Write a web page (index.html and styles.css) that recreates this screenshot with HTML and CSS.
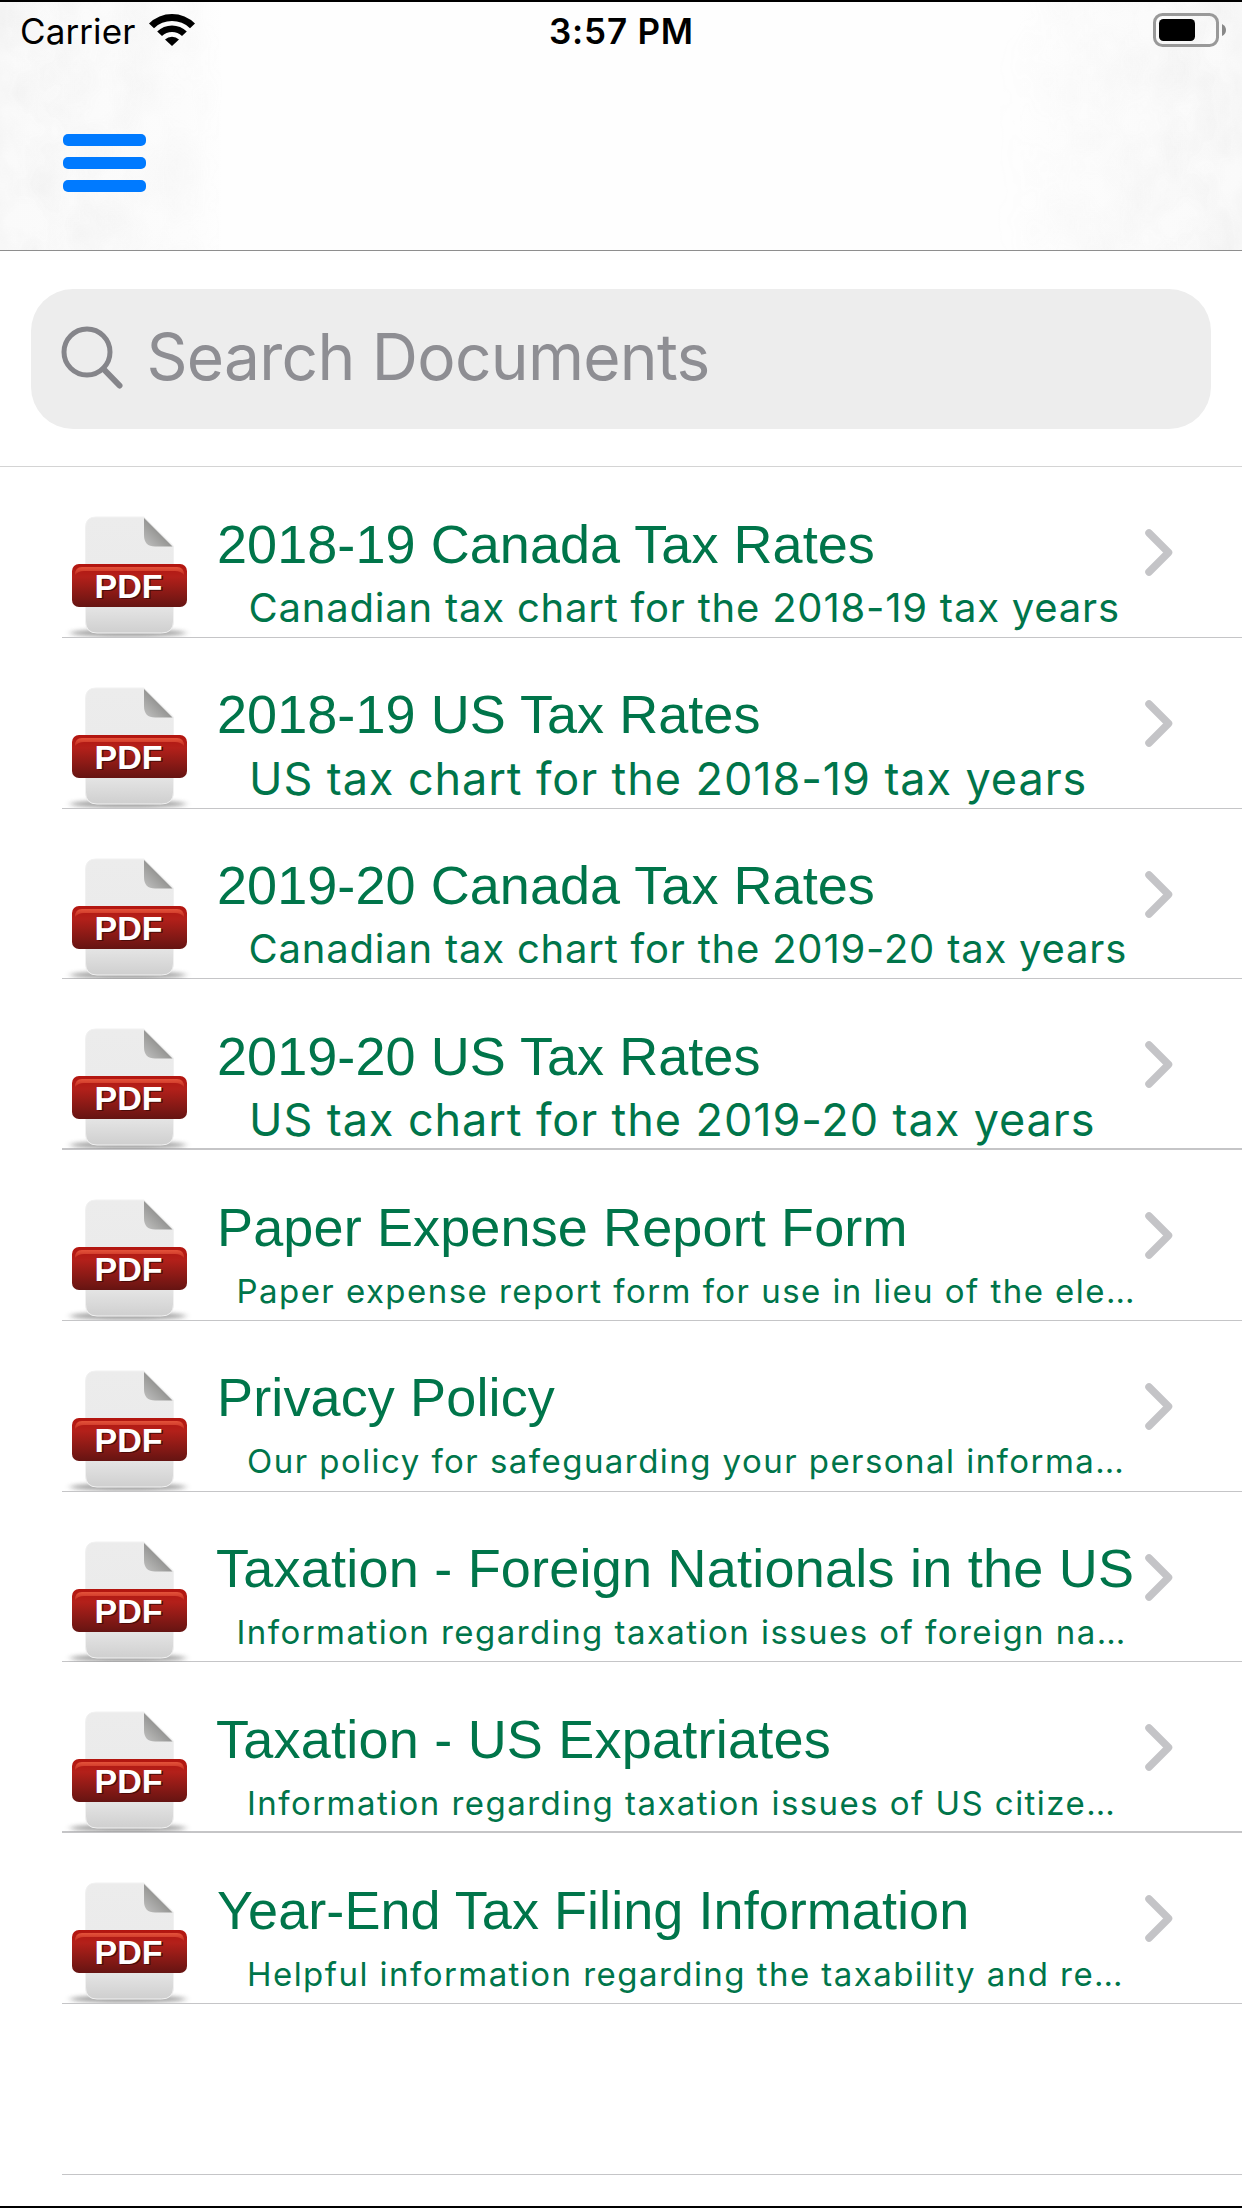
FILE: index.html
```html
<!DOCTYPE html>
<html lang="en">
<head>
<meta charset="utf-8">
<title>Documents</title>
<link rel="stylesheet" href="styles.css">
</head>
<body>
<svg class="defs" width="0" height="0" aria-hidden="true">
  <defs>
    <linearGradient id="paper" x1="0" y1="0" x2="0" y2="1">
      <stop offset="0" stop-color="#ececec"/><stop offset=".45" stop-color="#ebebeb"/><stop offset=".78" stop-color="#e4e4e4"/><stop offset="1" stop-color="#cfcfcf"/>
    </linearGradient>
    <linearGradient id="fold" x1=".1" y1=".9" x2=".6" y2=".4">
      <stop offset="0" stop-color="#b9b9b8"/><stop offset="1" stop-color="#8d8d8b"/>
    </linearGradient>
    <linearGradient id="band" x1="0" y1="0" x2="0" y2="1">
      <stop offset="0" stop-color="#b3150f"/><stop offset=".3" stop-color="#b3201a"/><stop offset="1" stop-color="#651412"/>
    </linearGradient>
    <linearGradient id="shine" x1="0" y1="0" x2="0" y2="1">
      <stop offset="0" stop-color="#e4523a"/><stop offset="1" stop-color="#c22c20"/>
    </linearGradient>
    <filter id="soft" x="-20%" y="-80%" width="140%" height="260%"><feGaussianBlur stdDeviation="3 2"/></filter>
    <symbol id="pdf" viewBox="0 0 130 170">
      <ellipse cx="66" cy="166" rx="58" ry="4" fill="#888" opacity=".75" filter="url(#soft)"/>
      <path d="M34 50H82L111.500 79V154Q111.500 166 99.500 166H35Q23.500 166 23.500 154V61Q23.500 50 34 50Z" fill="url(#paper)" stroke="#f1f1f1"/>
      <path d="M82 51L110.500 79.500H93Q82 79.500 82 68Z" fill="url(#fold)"/>
      <rect x="10" y="97" width="115" height="43" rx="7" fill="url(#band)"/>
      <path d="M13 108Q13 100 20 100H115Q122 100 122 108Q119 104 113 104H22Q16 104 13 108Z" fill="url(#shine)"/>
      <text class="pdf-label shade" x="34" y="132">PDF</text>
      <text class="pdf-label" x="32.500" y="130.500">PDF</text>
    </symbol>
    <symbol id="chevron" viewBox="0 0 28 47">
      <path d="M4 4L23.500 23.500L4 43" fill="none" stroke="#c4c4c7" stroke-width="7.500" stroke-linecap="round" stroke-linejoin="round"/>
    </symbol>
  </defs>
</svg>
<div class="screen">
  <header class="nav">
    <svg class="texture" width="1242" height="248" aria-hidden="true">
      <defs>
        <filter id="grain" x="0" y="0" width="100%" height="100%">
          <feTurbulence type="fractalNoise" baseFrequency=".025 .02" numOctaves="3" seed="4"/>
          <feColorMatrix values="0 0 0 0 .5  0 0 0 0 .5  0 0 0 0 .5  .22 0 0 0 -.06"/>
        </filter>
        <linearGradient id="edges">
          <stop offset="0" stop-color="#fff"/><stop offset=".16" stop-color="#555"/><stop offset=".18" stop-color="#000"/>
          <stop offset=".8" stop-color="#000"/><stop offset=".86" stop-color="#555"/><stop offset="1" stop-color="#fff"/>
        </linearGradient>
        <mask id="sides"><rect width="1242" height="248" fill="url(#edges)"/></mask>
      </defs>
      <g mask="url(#sides)"><rect width="1242" height="248" filter="url(#grain)"/></g>
    </svg>
    <div class="status">
      <div class="carrier"><span>Carrier</span>
        <svg width="46" height="33" viewBox="0 0 46 33">
          <path d="M0 10.500A32.500 32.500 0 0 1 46 10.500L41 15.200A26 26 0 0 0 5 15.200Z"/>
          <path d="M8.200 18.500A21 21 0 0 1 37.800 18.500L33 23A14.500 14.500 0 0 0 13 23Z"/>
          <path d="M16 26.500A10.500 10.500 0 0 1 30 26.500L23 33Z"/>
        </svg>
      </div>
      <div class="time">3:57 PM</div>
      <div class="battery">
        <svg width="73" height="34" viewBox="0 0 73 34">
          <rect x="1.500" y="1.500" width="63" height="31" rx="8" fill="none" stroke="#999" stroke-width="3"/>
          <rect x="6" y="6" width="36" height="22" rx="4.500"/>
          <path d="M69 11Q73 13 73 17T69 23Z" fill="#888"/>
        </svg>
      </div>
    </div>
    <button class="menu" aria-label="Menu"><span></span><span></span><span></span></button>
  </header>
  <div class="search">
    <label class="field">
      <svg width="64" height="66" viewBox="0 0 64 66" fill="none" stroke="#85858a">
        <circle cx="26" cy="26" r="23" stroke-width="5"/><path d="M42.500 43L58.500 59.500" stroke-width="6" stroke-linecap="round"/>
      </svg>
      <span>Search Documents</span>
    </label>
  </div>
  <main class="list">
    <article class="row"><svg class="icon"><use href="#pdf"/></svg><div class="text"><h2>2018-19 Canada Tax Rates</h2><p class="medium">Canadian tax chart for the 2018-19 tax years</p></div><svg class="chev"><use href="#chevron"/></svg></article>
    <article class="row"><svg class="icon"><use href="#pdf"/></svg><div class="text"><h2>2018-19 US Tax Rates</h2><p class="large">US tax chart for the 2018-19 tax years</p></div><svg class="chev"><use href="#chevron"/></svg></article>
    <article class="row"><svg class="icon"><use href="#pdf"/></svg><div class="text"><h2>2019-20 Canada Tax Rates</h2><p class="medium">Canadian tax chart for the 2019-20 tax years</p></div><svg class="chev"><use href="#chevron"/></svg></article>
    <article class="row heavy"><svg class="icon"><use href="#pdf"/></svg><div class="text"><h2>2019-20 US Tax Rates</h2><p class="large">US tax chart for the 2019-20 tax years</p></div><svg class="chev"><use href="#chevron"/></svg></article>
    <article class="row"><svg class="icon"><use href="#pdf"/></svg><div class="text"><h2 class="loose">Paper Expense Report Form</h2><p class="outdent">Paper expense report form for use in lieu of the ele…</p></div><svg class="chev"><use href="#chevron"/></svg></article>
    <article class="row"><svg class="icon"><use href="#pdf"/></svg><div class="text"><h2 class="loose">Privacy Policy</h2><p>Our policy for safeguarding your personal informa…</p></div><svg class="chev"><use href="#chevron"/></svg></article>
    <article class="row"><svg class="icon"><use href="#pdf"/></svg><div class="text"><h2 class="looser">Taxation - Foreign Nationals in the US</h2><p class="outdent">Information regarding taxation issues of foreign na…</p></div><svg class="chev"><use href="#chevron"/></svg></article>
    <article class="row heavy"><svg class="icon"><use href="#pdf"/></svg><div class="text"><h2 class="looser">Taxation - US Expatriates</h2><p>Information regarding taxation issues of US citize…</p></div><svg class="chev"><use href="#chevron"/></svg></article>
    <article class="row"><svg class="icon"><use href="#pdf"/></svg><div class="text"><h2>Year-End Tax Filing Information</h2><p>Helpful information regarding the taxability and re…</p></div><svg class="chev"><use href="#chevron"/></svg></article>
    <div class="row"></div>
  </main>
</div>
</body>
</html>
```
FILE: styles.css
```css
* { box-sizing: border-box; }
body { margin: 0; background: #fff; }
.defs { position: absolute; }
.screen {
  width: 1242px; height: 2208px; overflow: hidden;
  border-top: 2px solid #000; border-bottom: 2px solid #000;
  font-family: Inter, "Liberation Sans", sans-serif;
  background: #fff;
}
.nav {
  position: relative; height: 249px; border-bottom: 1px solid #8e8e8e;
  background: linear-gradient(90deg, #fafafa, #fcfcfc 15%, #fefefe 18%, #fefefe 82%, #fcfcfc 86%, #fafafa);
}
.texture { position: absolute; left: 0; top: 0; }
.status {
  position: relative; height: 60px; padding: 0 16px 0 20px;
  display: grid; grid-template-columns: 1fr auto 1fr; align-items: start;
  font-size: 35px; line-height: 58px; color: #000;
}
.carrier { display: flex; align-items: flex-start; gap: 14px; letter-spacing: .1px; }
.carrier svg { margin-top: 11px; }
.time { font-weight: 600; letter-spacing: .8px; margin-left: -3px; }
.battery { display: flex; justify-content: flex-end; padding-top: 11px; }
.menu {
  position: relative; display: flex; flex-direction: column; gap: 11.3px;
  width: 83px; margin: 71.5px 0 0 63px; padding: 0; border: 0; background: none;
}
.menu span { height: 12px; border-radius: 5px; background: #007aff; }
.search { height: 216px; padding: 38px 31px 0; border-bottom: 1px solid #d4d4d4; }
.field {
  display: flex; align-items: center; height: 140px; padding-left: 30px;
  border-radius: 42px; background: #ededed;
}
.field span {
  margin-left: 21.5px; font-size: 64px; letter-spacing: -.72px; line-height: 132px;
  color: #8e8e93; position: relative; top: -2px;
}
.row {
  display: flex; align-items: flex-start; height: 170.78px; margin-left: 62px;
  border-bottom: 1px solid #c5c5c7; color: #00754a;
}
.heavy { border-bottom-width: 2px; }
.icon { flex: none; width: 130px; height: 170px; }
.chev { flex: none; width: 28px; height: 47px; margin: 62px 0 0 -1px; }
.text { flex: none; width: 954px; padding: 45.5px 0 0 25px; white-space: nowrap; }
h2 {
  margin: 0; font: 400 54px/62px "Liberation Sans", sans-serif; letter-spacing: .06px;
}
.loose { letter-spacing: .13px; }
.looser { letter-spacing: .23px; margin-left: -1px; }
p { margin: 8px 0 0 30px; font-size: 33px; line-height: 50px; letter-spacing: 1.45px; }
.outdent { margin-left: 19.5px; }
.medium { margin-left: 31.5px; font-size: 40px; letter-spacing: .79px; }
.large { margin: 8.5px 0 0 32px; font-size: 45px; letter-spacing: .92px; }
.pdf-label { font: 700 34px "Liberation Sans", sans-serif; fill: #fff; }
.shade { fill: #4a0c0a; }
```
